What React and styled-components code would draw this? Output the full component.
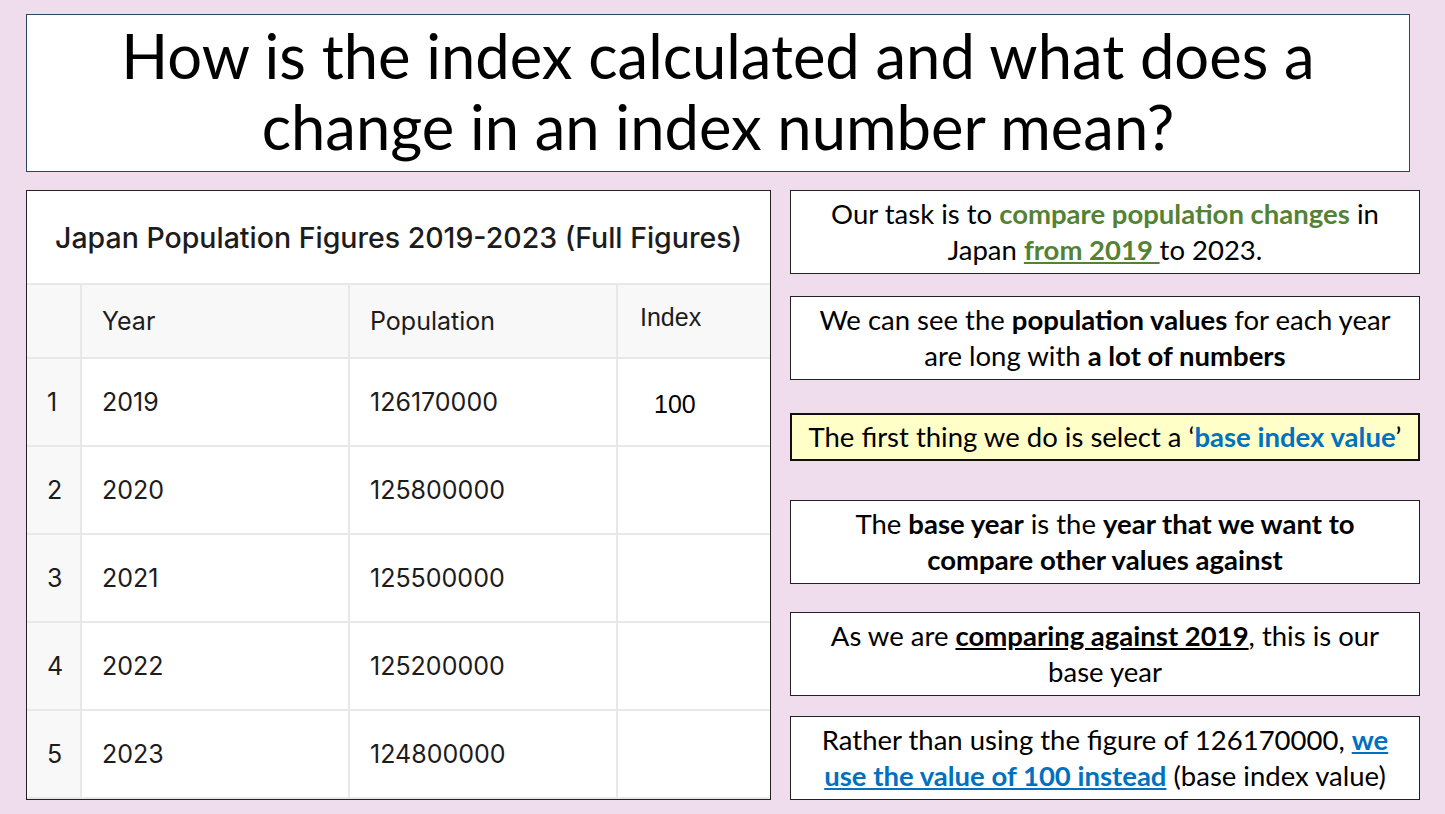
import React from "react";
import styled, { createGlobalStyle } from "styled-components";

const GlobalStyle = createGlobalStyle`
  html, body {
    margin: 0;
    padding: 0;
    background: #efddee;
  }
  * {
    box-sizing: border-box;
  }
`;

const Page = styled.div`
  width: 1445px;
  height: 814px;
  padding: 14px 25px 0 26px;
  background: #efddee;
  font-family: "Lato", "Open Sans", sans-serif;
  color: #000;
`;

const TitleBox = styled.div`
  width: 1384px;
  height: 158px;
  display: flex;
  align-items: center;
  justify-content: center;
  background: #fff;
  border: 1.5px solid #2c4660;
`;

const Title = styled.h1`
  margin: 0 0 4px;
  font-weight: 400;
  font-size: 61.5px;
  line-height: 71px;
  text-align: center;
`;

const Main = styled.div`
  display: flex;
  gap: 19px;
  margin-top: 18px;
`;

const TablePanel = styled.div`
  width: 745px;
  height: 610px;
  background: #fff;
  border: 1.5px solid #222;
  overflow: hidden;
  font-family: "Inter", "Liberation Sans", sans-serif;
  color: #1c1c1c;
`;

const TableTitle = styled.div`
  height: 94px;
  display: flex;
  align-items: center;
  justify-content: center;
  font-size: 28.5px;
  font-weight: 500;
  border-bottom: 2px solid #e8e8e8;
`;

const Grid = styled.table`
  border-collapse: collapse;
  table-layout: fixed;
  width: 100%;
`;

const HeadCell = styled.th`
  height: 73px;
  background: #f8f8f8;
  border: 2px solid #e8e8e8;
  border-top: none;
  font-weight: 400;
  font-size: 25px;
  text-align: left;
  padding: 0 0 0 ${(p) => p.$pad || 20}px;
  vertical-align: middle;
  &:first-child {
    border-left: none;
  }
  &:last-child {
    border-right: none;
  }
`;

const IndexHead = styled(HeadCell)`
  font-family: "Liberation Sans", sans-serif;
  font-size: 25px;
  padding-bottom: 8px;
`;

const Cell = styled.td`
  height: 88px;
  border: 2px solid #e8e8e8;
  font-size: 25px;
  padding: 0 0 0 ${(p) => p.$pad || 20}px;
  background: ${(p) => (p.$shade ? "#f8f8f8" : "#fff")};
  vertical-align: middle;
  &:first-child {
    border-left: none;
  }
  &:last-child {
    border-right: none;
  }
`;

const IndexValue = styled(Cell)`
  font-family: "Liberation Sans", sans-serif;
  font-size: 25px;
  color: #000;
  padding-left: 36px;
  padding-top: 4px;
`;

const Notes = styled.div`
  width: 630px;
  display: flex;
  flex-direction: column;
`;

const Note = styled.div`
  margin-top: ${(p) => p.$top || 0}px;
  min-height: ${(p) => (p.$single ? 48 : 84)}px;
  display: flex;
  align-items: center;
  justify-content: center;
  text-align: center;
  padding: 0 10px;
  font-size: 27.5px;
  line-height: 36px;
  white-space: nowrap;
  background: ${(p) => (p.$highlight ? "#ffffc7" : "#fff")};
  border: ${(p) => (p.$highlight ? "2.5px solid #111" : "1.5px solid #222")};
`;

const Green = styled.b`
  color: #548235;
  text-decoration: ${(p) => (p.$u ? "underline" : "none")};
`;

const Blue = styled.b`
  color: #0070c0;
  text-decoration: ${(p) => (p.$u ? "underline" : "none")};
`;

const Under = styled.b`
  text-decoration: underline;
`;

const rows = [
  { n: 1, year: 2019, pop: "126170000", index: "100" },
  { n: 2, year: 2020, pop: "125800000" },
  { n: 3, year: 2021, pop: "125500000" },
  { n: 4, year: 2022, pop: "125200000" },
  { n: 5, year: 2023, pop: "124800000" },
];

export default function App() {
  return (
    <Page>
      <GlobalStyle />
      <TitleBox>
        <Title>
          How is the index calculated and what does a
          <br />
          change in an index number mean?
        </Title>
      </TitleBox>
      <Main>
        <TablePanel>
          <TableTitle>Japan Population Figures 2019-2023 (Full Figures)</TableTitle>
          <Grid>
            <colgroup>
              <col style={{ width: 54 }} />
              <col style={{ width: 268 }} />
              <col style={{ width: 268 }} />
              <col />
            </colgroup>
            <thead>
              <tr>
                <HeadCell />
                <HeadCell>Year</HeadCell>
                <HeadCell>Population</HeadCell>
                <IndexHead $pad={22}>Index</IndexHead>
              </tr>
            </thead>
            <tbody>
              {rows.map((r) => (
                <tr key={r.n}>
                  <Cell $shade $pad={20}>
                    {r.n}
                  </Cell>
                  <Cell>{r.year}</Cell>
                  <Cell>{r.pop}</Cell>
                  <IndexValue>{r.index || ""}</IndexValue>
                </tr>
              ))}
            </tbody>
          </Grid>
        </TablePanel>
        <Notes>
          <Note>
            <span>
              Our task is to <Green>compare population changes</Green> in
              <br />
              Japan <Green $u>from 2019 </Green>to 2023.
            </span>
          </Note>
          <Note $top={22}>
            <span>
              We can see the <b>population values</b> for each year
              <br />
              are long with <b>a lot of numbers</b>
            </span>
          </Note>
          <Note $top={33} $single $highlight>
            <span>
              The first thing we do is select a ‘<Blue>base index value</Blue>’
            </span>
          </Note>
          <Note $top={39}>
            <span>
              The <b>base year</b> is the <b>year that we want to</b>
              <br />
              <b>compare other values against</b>
            </span>
          </Note>
          <Note $top={28}>
            <span>
              As we are <Under>comparing against 2019</Under>, this is our
              <br />
              base year
            </span>
          </Note>
          <Note $top={20}>
            <span>
              Rather than using the figure of 126170000, <Blue $u>we</Blue>
              <br />
              <Blue $u>use the value of 100 instead</Blue> (base index value)
            </span>
          </Note>
        </Notes>
      </Main>
    </Page>
  );
}
